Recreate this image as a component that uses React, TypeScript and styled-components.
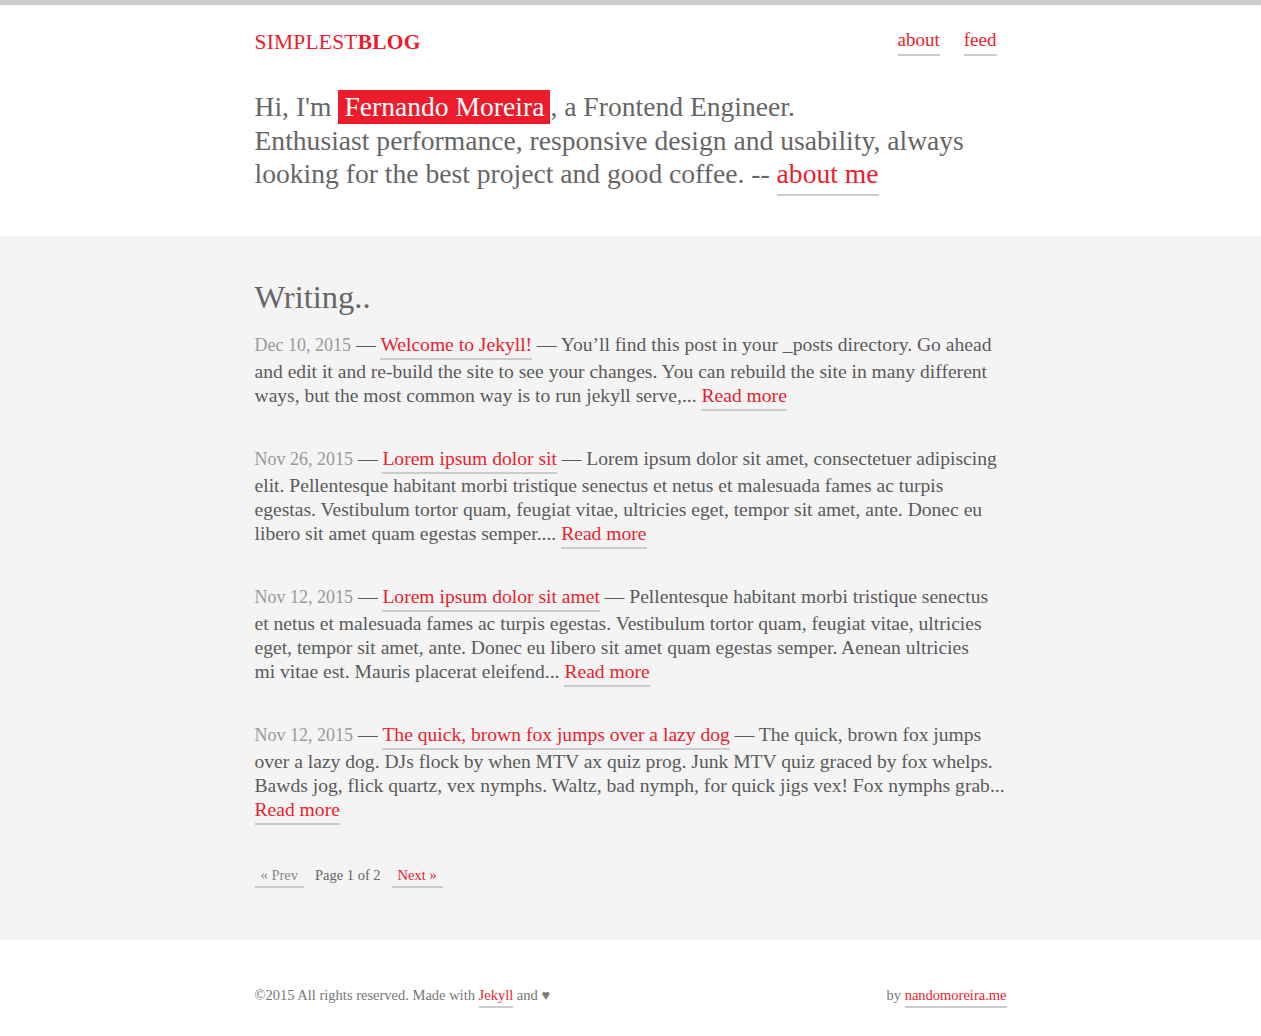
import React from "react";
import styled, { createGlobalStyle } from "styled-components";

const RED = "#ec1c2d";
const TEXT = "#5a5a5a";
const LINE = "#cccccc";
const SERIF = `"Liberation Serif", "Times New Roman", serif`;

const GlobalStyle = createGlobalStyle`
  html, body {
    margin: 0;
    padding: 0;
    background: #ffffff;
  }

  body {
    font-family: ${SERIF};
    color: ${TEXT};
    border-top: 5px solid ${LINE};
  }

  a {
    color: ${RED};
    text-decoration: none;
  }
`;

const Container = styled.div`
  width: 752px;
  margin: 0 auto;
`;

const Header = styled.header`
  padding: 23px 0 46px;
`;

const TopBar = styled.div`
  display: flex;
  align-items: center;
  justify-content: space-between;
  height: 28px;
`;

const Logo = styled.a`
  font-size: 21.5px;
  letter-spacing: 0.2px;
  color: ${RED};

  b {
    font-weight: 700;
  }
`;

const Nav = styled.nav`
  display: flex;
  gap: 24px;
  margin-right: 10px;
`;

const Underlined = styled.a<{ $muted?: boolean }>`
  display: inline-block;
  border-bottom: 2px solid ${LINE};
  color: ${(p) => (p.$muted ? "#888888" : RED)};
`;

const NavLink = styled(Underlined)`
  font-size: 19px;
  line-height: 24px;
  padding-bottom: 2px;
`;

const Intro = styled.p`
  margin: 34px 0 0;
  font-size: 27.6px;
  line-height: 33px;
  color: #666666;
`;

const Name = styled.span`
  display: inline-block;
  line-height: 34px;
  padding: 0 6px;
  background: ${RED};
  color: #ffffff;
`;

const AboutLink = styled.a`
  border-bottom: 2px solid ${LINE};
  padding-bottom: 5px;
`;

const Writing = styled.section`
  background: #f4f4f4;
  padding: 43px 0 52px;
`;

const Heading = styled.h2`
  margin: 0 0 18px;
  font-size: 32.5px;
  line-height: 36px;
  font-weight: 400;
  color: #666666;
`;

const Post = styled.article`
  margin: 0 0 36px;
  font-size: 19.58px;
  line-height: 24px;
  color: ${TEXT};
`;

const PostDate = styled.span`
  font-size: 18px;
  color: #999999;
`;

const PostLink = styled(Underlined)`
  line-height: 24px;
  padding-bottom: 1px;
`;

const Pagination = styled.div`
  display: flex;
  align-items: flex-start;
  gap: 11px;
  margin-top: 40px;
  font-size: 14.5px;
  line-height: 20px;
  color: #666666;
`;

const PageLink = styled(Underlined)`
  padding: 0 6px 1px;
`;

const Footer = styled.footer`
  padding: 45px 0 20px;
`;

const FooterRow = styled.div`
  display: flex;
  justify-content: space-between;
  font-size: 14.5px;
  line-height: 20px;
  color: #777777;
`;

const FooterLink = styled(Underlined)`
  padding-bottom: 1px;
`;

// non-breaking spaces keep the wraps where the original puts them
const posts = [
  {
    date: "Dec 10, 2015",
    title: "Welcome to Jekyll!",
    excerpt:
      "You’ll find this post in your _posts directory. Go ahead and edit it and re-build the site to see your changes. You can rebuild the site in many different ways, but the most common way is to run jekyll serve,..."
  },
  {
    date: "Nov 26, 2015",
    title: "Lorem ipsum dolor sit",
    excerpt:
      "Lorem ipsum dolor sit amet, consectetuer adipiscing elit. Pellentesque habitant morbi tristique senectus et netus et malesuada fames ac turpis egestas. Vestibulum tortor quam, feugiat vitae, ultricies eget, tempor sit amet, ante. Donec eu libero sit amet quam egestas semper...."
  },
  {
    date: "Nov 12, 2015",
    title: "Lorem ipsum dolor sit amet",
    excerpt:
      "Pellentesque habitant morbi tristique senectus et\u00a0netus et malesuada fames ac turpis egestas. Vestibulum tortor quam, feugiat vitae, ultricies eget, tempor sit amet, ante. Donec eu libero sit amet quam egestas semper. Aenean ultricies mi\u00a0vitae est. Mauris placerat eleifend..."
  },
  {
    date: "Nov 12, 2015",
    title: "The quick, brown fox jumps over a lazy dog",
    excerpt:
      "The quick, brown fox jumps over a lazy dog. DJs flock by when MTV ax quiz prog. Junk MTV quiz graced by fox whelps. Bawds jog, flick quartz, vex nymphs. Waltz, bad nymph, for quick jigs vex! Fox nymphs grab..."
  }
];

export default function App() {
  return (
    <>
      <GlobalStyle />
      <Header>
        <Container>
          <TopBar>
            <Logo href="#">
              SIMPLEST<b>BLOG</b>
            </Logo>
            <Nav>
              <NavLink href="#">about</NavLink>
              <NavLink href="#">feed</NavLink>
            </Nav>
          </TopBar>
          <Intro>
            Hi, I'm <Name>Fernando Moreira</Name>, a Frontend Engineer.
            <br />
            Enthusiast performance, responsive design and usability, always
            looking for the best project and good coffee. --{" "}
            <AboutLink href="#">about me</AboutLink>
          </Intro>
        </Container>
      </Header>

      <Writing>
        <Container>
          <Heading>Writing..</Heading>
          {posts.map((post) => (
            <Post key={post.title}>
              <PostDate>{post.date}</PostDate> —{" "}
              <PostLink href="#">{post.title}</PostLink> — {post.excerpt}{" "}
              <PostLink href="#">Read more</PostLink>
            </Post>
          ))}
          <Pagination>
            <PageLink href="#" $muted>
              « Prev
            </PageLink>
            <span>Page 1 of 2</span>
            <PageLink href="#">Next »</PageLink>
          </Pagination>
        </Container>
      </Writing>

      <Footer>
        <Container>
          <FooterRow>
            <span>
              ©2015 All rights reserved. Made with{" "}
              <FooterLink href="#">Jekyll</FooterLink> and ♥
            </span>
            <span>
              by <FooterLink href="#">nandomoreira.me</FooterLink>
            </span>
          </FooterRow>
        </Container>
      </Footer>
    </>
  );
}
